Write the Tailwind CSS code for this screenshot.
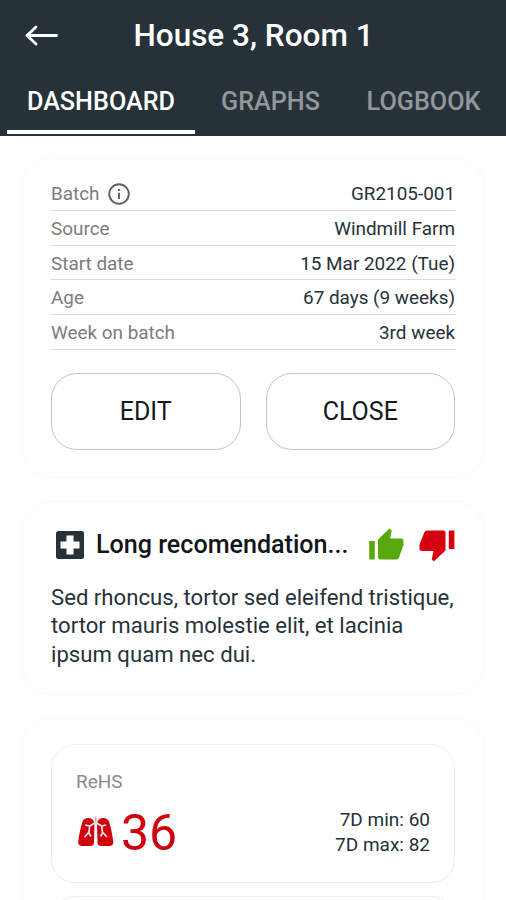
<!DOCTYPE html>
<html lang="en">

<head>
    <meta charset="UTF-8">
    <meta name="viewport" content="width=device-width, initial-scale=1.0">
    <title>House 3, Room 1</title>
    <script src="https://cdn.jsdelivr.net/npm/@tailwindcss/browser@4"></script>
</head>

<body class="h-[900px] overflow-hidden bg-white font-['Roboto',sans-serif] text-[#263238]">
    <!-- Header -->
    <header class="flex h-[136px] flex-col bg-[#263238] text-white">
        <div class="grid h-[72px] grid-cols-[85px_1fr_84px] items-center">
            <button class="pl-[25px]">
                <svg class="h-[22px] w-[34px]" viewBox="0 0 34 22" fill="none" stroke="currentColor" stroke-width="2.8" stroke-linecap="round" stroke-linejoin="round">
                    <path d="M31.500 10.500H2M11 2L2 10.500l9 8.500" />
                </svg>
            </button>
            <h1 class="text-center text-[31.5px] leading-none font-medium whitespace-nowrap">House 3, Room 1</h1>
        </div>
        <nav class="flex flex-1 pl-[7px] text-[25.2px] leading-[60px] font-medium whitespace-nowrap">
            <a class="h-[62px] w-[188px] border-b-4 border-white text-center" href="#">DASHBOARD</a>
            <a class="w-[151px] text-center text-[#929799]" href="#">GRAPHS</a>
            <a class="w-[155px] text-center text-[#929799]" href="#">LOGBOOK</a>
        </nav>
    </header>

    <main class="flex h-[764px] flex-col gap-[23px] overflow-hidden px-[22px] pt-[22px]">
        <!-- Batch info -->
        <section class="h-[320px] shrink-0 rounded-[28px] border border-[#f9f9f9] px-7 pt-[17px]">
            <dl class="text-[18.9px] leading-[35.5px]">
                <div class="flex h-[34.75px] justify-between border-b border-[#dcdcdc]">
                    <dt class="flex h-[35px] items-center gap-2 text-[#7c7c7c]">Batch
                        <svg class="size-[22px]" viewBox="0 0 22 22" fill="none" stroke="#616161" stroke-width="1.9">
                            <circle cx="11" cy="11" r="9.8" />
                            <path d="M11 9.7v6.3M11 6v2" />
                        </svg>
                    </dt>
                    <dd>GR2105-001</dd>
                </div>
                <div class="flex h-[34.75px] justify-between border-b border-[#dcdcdc]">
                    <dt class="text-[#7c7c7c]">Source</dt>
                    <dd>Windmill Farm</dd>
                </div>
                <div class="flex h-[34.75px] justify-between border-b border-[#dcdcdc]">
                    <dt class="text-[#7c7c7c]">Start date</dt>
                    <dd>15 Mar 2022 (Tue)</dd>
                </div>
                <div class="flex h-[34.75px] justify-between border-b border-[#dcdcdc]">
                    <dt class="text-[#7c7c7c]">Age</dt>
                    <dd>67 days (9 weeks)</dd>
                </div>
                <div class="flex h-[34.75px] justify-between border-b border-[#dcdcdc]">
                    <dt class="text-[#7c7c7c]">Week on batch</dt>
                    <dd>3rd week</dd>
                </div>
            </dl>
            <div class="mt-[23px] grid grid-cols-2 gap-[25px] text-[25px] text-[#14191c]">
                <button class="h-[77px] rounded-[26px] border-[1.5px] border-[#c4c4c4]">EDIT</button>
                <button class="h-[77px] rounded-[26px] border-[1.5px] border-[#c4c4c4]">CLOSE</button>
            </div>
        </section>

        <!-- Recommendation -->
        <section class="h-[194px] shrink-0 rounded-[28px] border border-[#f9f9f9] px-7 pt-[23px]">
            <div class="flex h-[40px] items-center">
                <svg class="ml-[5px] size-[28px]" viewBox="0 0 28 28">
                    <rect width="28" height="28" rx="2.5" fill="#263238" />
                    <path d="M10.500 4.500h7v6h6v7h-6v6h-7v-6h-6v-7h6z" fill="#fff" />
                </svg>
                <h2 class="ml-[12px] text-[25.1px] font-medium whitespace-nowrap text-[#111618]">Long recomendation...</h2>
                <svg class="mr-[15px] mb-[2px] ml-auto h-[32px] w-[36px]" viewBox="0 0 36 32" fill="#58a80d">
                    <path d="M1.200 13h5.600v18.500H1.200zM10 11.500 21.500.500 23.800 2.500 22 10.500H33.500q2 0 2 2.500v4L30.800 30q-.7 1.500-2.500 1.500H12q-2 0-2-2z" />
                </svg>
                <svg class="h-[33px] w-[36px]" viewBox="0 0 36 33" fill="#d6000f">
                    <path d="M29.800 1.500h5.600v18.500h-5.600zM26.500 21.500 15 32.300 12.700 30.500 14.500 22H3q-2.500 0-2.500-2.500v-4L5.500 3q.7-1.500 2.500-1.500H24.500q2 0 2 2z" />
                </svg>
            </div>
            <p class="mt-[18px] text-[22.15px] leading-[28.4px] whitespace-nowrap">Sed rhoncus, tortor sed eleifend tristique,<br>tortor mauris molestie elit, et lacinia<br>ipsum quam nec dui.</p>
        </section>

        <!-- Health scores -->
        <section class="min-h-0 flex-1 overflow-hidden rounded-t-[28px] border border-b-0 border-[#f9f9f9] px-7 pt-[25px]">
            <div class="flex h-[139px] flex-col rounded-[24px] border-[1.5px] border-[#ececec] px-6 pt-[24px]">
                <h3 class="text-[19px] leading-[26px] text-[#8a8a8a]">ReHS</h3>
                <div class="flex justify-between">
                    <div class="flex h-[76px] items-center text-[50px] leading-none text-[#d0000f]">
                        <svg class="mr-[7px] mb-[3px] ml-[2px] h-[31px] w-[36px]" viewBox="0 0 36 31">
                            <path d="M16.500 7C15 1 7 .5 4.500 5.500 2.500 12 1.200 18 .3 25c-.5 3.500 1 5 4 5h8c2.500 0 3.700-1.200 3.700-3.500zM19 7C20.500 1 28.500 .5 31 5.500c2 6.500 3.300 12.500 4.200 19.500.5 3.500-1 5-4 5h-8c-2.500 0-3.700-1.200-3.700-3.500z" fill="currentColor" />
                            <path d="M17.700 1v5.500l-6 3.500-4.500-1M11.700 10l-.7 6-4.500 5M10.500 16l2.500 4.500M17.700 6.500l6 3.500 4.500-1M23.700 10l.7 6 4.500 5M25 16l-2.500 4.500" fill="none" stroke="#fbe4e4" stroke-width="1.700" />
                            <path d="M17.700 .5v5.500" fill="none" stroke="#e9a0a0" stroke-width="1.500" />
                        </svg>
                        36
                    </div>
                    <div class="pt-[12px] text-right text-[19px] leading-[25px]">
                        7D min: 60<br>7D max: 82
                    </div>
                </div>
            </div>
            <div class="mt-[13px] h-[139px] rounded-[24px] border-[1.5px] border-[#ececec]"></div>
        </section>
    </main>
</body>

</html>
